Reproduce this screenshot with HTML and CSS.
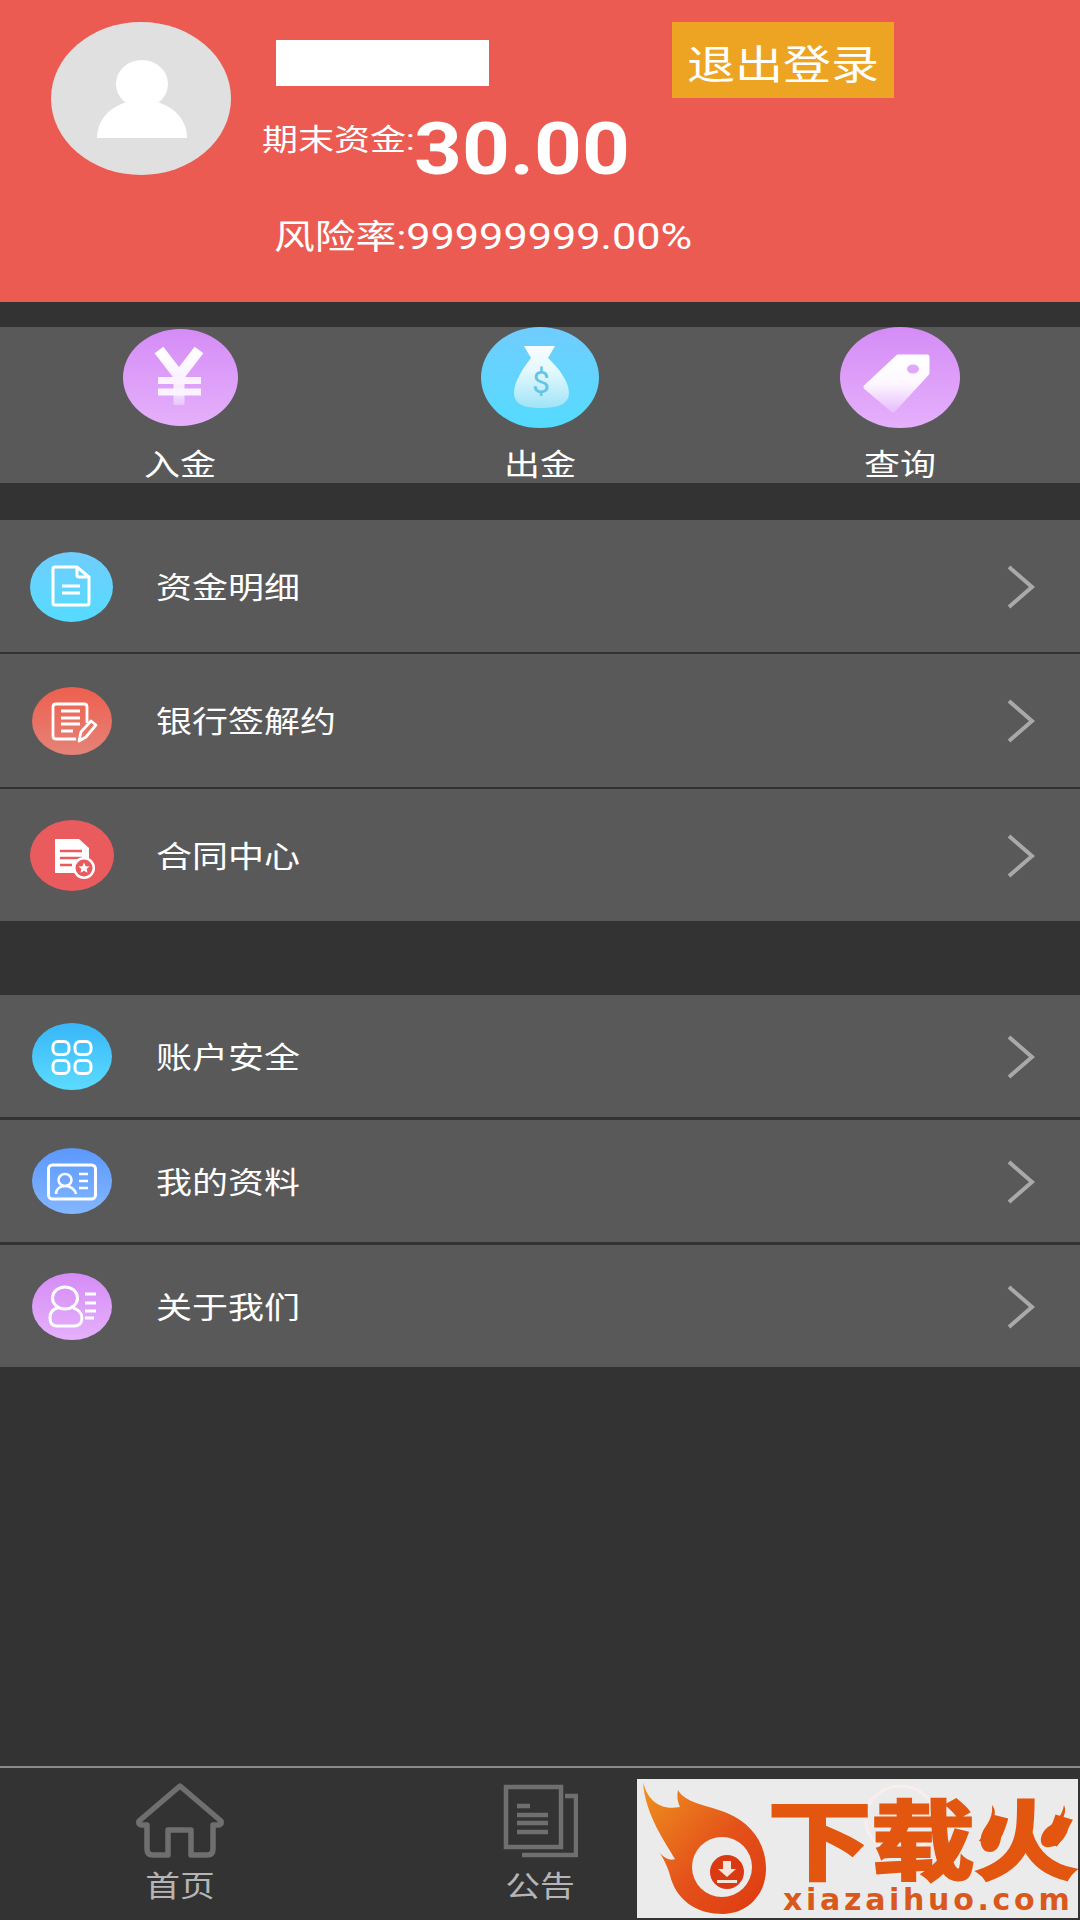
FILE: index.html
```html
<!DOCTYPE html>
<html lang="zh-CN">
<head>
    <meta charset="UTF-8">
    <meta name="viewport" content="width=device-width, initial-scale=1.0">
    <title>我的账户</title>
    <link rel="stylesheet" href="styles.css">
</head>
<body>
    <svg class="defs" width="0" height="0">
        <defs>
            <linearGradient id="g-purple" x1="0" y1="0" x2="0" y2="1"><stop offset="0" stop-color="#d58cf6"/><stop offset="1" stop-color="#e5b0fb"/></linearGradient>
            <linearGradient id="g-sky" x1="0" y1="0" x2="0" y2="1"><stop offset="0" stop-color="#70cdfe"/><stop offset="1" stop-color="#55dbff"/></linearGradient>
            <linearGradient id="g-blue" x1="0" y1="0" x2="0" y2="1"><stop offset="0" stop-color="#38b6f8"/><stop offset="1" stop-color="#5cdbff"/></linearGradient>
            <linearGradient id="g-coral" x1="0" y1="0" x2="0" y2="1"><stop offset="0" stop-color="#ee5f4e"/><stop offset="1" stop-color="#e58378"/></linearGradient>
            <linearGradient id="g-royal" x1="0" y1="0" x2="0" y2="1"><stop offset="0" stop-color="#5c99fd"/><stop offset="1" stop-color="#83b6ff"/></linearGradient>
            <linearGradient id="g-white-down" x1="0" y1="0" x2="0" y2="1"><stop offset="0" stop-color="#ffffff"/><stop offset="0.5" stop-color="#fdf8ff"/><stop offset="0.8" stop-color="#f1d6fe"/><stop offset="1" stop-color="#e9bffc"/></linearGradient>
            <linearGradient id="g-yen" x1="0" y1="0" x2="0" y2="1"><stop offset="0" stop-color="#ffffff"/><stop offset="0.7" stop-color="#f8edff"/><stop offset="1" stop-color="#e9c4fc"/></linearGradient>
            <linearGradient id="g-bag" x1="0" y1="0" x2="0" y2="1"><stop offset="0" stop-color="#f8fdff"/><stop offset="0.4" stop-color="#e4f8fd"/><stop offset="1" stop-color="#9fe4f7"/></linearGradient>
            <linearGradient id="g-flame" x1="0" y1="0" x2="1" y2="1"><stop offset="0" stop-color="#ef931f"/><stop offset="0.55" stop-color="#e4521a"/><stop offset="1" stop-color="#dd3a10"/></linearGradient>
        </defs>
    </svg>

    <header class="user-head">
        <svg class="avatar" width="180" height="153" viewBox="0 0 180 153">
            <ellipse cx="90" cy="76.500" rx="90" ry="76.500" fill="#e0e0e0"/>
            <ellipse cx="91" cy="62" rx="26" ry="24" fill="#fff"/>
            <path d="M46 116C46 92 68 78 91 78C114 78 136 92 136 116Z" fill="#fff"/>
        </svg>
        <div class="user-info">
            <div class="name-row">
                <div class="name-box"></div>
                <div class="logout"><span class="stretch-c">退出登录</span></div>
            </div>
            <div class="balance-row">
                <span class="balance-label stretch">期末资金:</span>
                <span class="balance-num stretch">30.00</span>
            </div>
            <div class="risk-row"><span class="stretch">风险率:<span class="risk-num">99999999.00%</span></span></div>
        </div>
    </header>

    <section class="actions">
        <div class="action">
            <svg class="action-yen" width="115" height="97" viewBox="0 0 115 97">
                <ellipse cx="57.500" cy="48.500" rx="57.500" ry="48.500" fill="url(#g-purple)"/>
                <path d="M36 21L56 47L76 21M56 47V76" fill="none" stroke="url(#g-yen)" stroke-width="11"/>
                <path d="M35 51.500H78M35 63H78" fill="none" stroke="#fbf3ff" stroke-width="7"/>
            </svg>
            <span class="action-text stretch-c">入金</span>
        </div>
        <div class="action">
            <svg width="118" height="101" viewBox="0 0 118 101">
                <ellipse cx="59" cy="50.500" rx="59" ry="50.500" fill="url(#g-sky)"/>
                <path d="M43 19L74 19L67 31C78 41 88 55 88 66C88 77 77 81 60 81C43 81 33 77 33 66C33 55 42 41 50 31Z" fill="url(#g-bag)"/>
                <text class="bag-mark" x="60" y="66" text-anchor="middle">$</text>
            </svg>
            <span class="action-text stretch-c">出金</span>
        </div>
        <div class="action">
            <svg width="120" height="101" viewBox="0 0 120 101">
                <ellipse cx="60" cy="50.500" rx="60" ry="50.500" fill="url(#g-purple)"/>
                <path d="M87 30L58 30L26 60L53 83L87 46Z" fill="url(#g-white-down)" stroke="url(#g-white-down)" stroke-width="5" stroke-linejoin="round"/>
                <ellipse cx="73" cy="42" rx="6" ry="4.500" fill="#dfa8f8"/>
            </svg>
            <span class="action-text stretch-c">查询</span>
        </div>
    </section>

    <section class="menu-group">
        <div class="menu-row">
            <svg class="menu-icon" width="83" height="70" viewBox="0 0 83 70">
                <ellipse cx="41.500" cy="35" rx="41.500" ry="35" fill="url(#g-sky)"/>
                <path d="M25 15H47L59 25V51Q59 53 57 53H25Q23 53 23 51V17Q23 15 25 15ZM47 15V23Q47 25 49 25H59M32 34H50M32 41H50" fill="none" stroke="#fff" stroke-width="3"/>
            </svg>
            <span class="menu-text stretch">资金明细</span>
            <svg class="chevron" width="28" height="44" viewBox="0 0 28 44"><path d="M2 2L25 22L2 42" fill="none" stroke="#a9a9a9" stroke-width="4"/></svg>
        </div>
        <div class="menu-row">
            <svg class="menu-icon icon-narrow" width="80" height="68" viewBox="0 0 80 68">
                <ellipse cx="40" cy="34" rx="40" ry="34" fill="url(#g-coral)"/>
                <path d="M44 52H24Q21 52 21 49V20Q21 17 24 17H52Q55 17 55 20V36M29 24H48M29 31H48M29 37H48M29 44H41" fill="none" stroke="#fff" stroke-width="2.800"/>
                <path d="M47 54L49 45L59 34L64 38L54 50Z" fill="none" stroke="#fff" stroke-width="2.800" stroke-linejoin="round"/>
            </svg>
            <span class="menu-text stretch">银行签解约</span>
            <svg class="chevron" width="28" height="44" viewBox="0 0 28 44"><path d="M2 2L25 22L2 42" fill="none" stroke="#a9a9a9" stroke-width="4"/></svg>
        </div>
        <div class="menu-row">
            <svg class="menu-icon icon-wide" width="84" height="71" viewBox="0 0 84 71">
                <ellipse cx="42" cy="35.500" rx="42" ry="35.500" fill="#ea5b5e"/>
                <path d="M25 19H49L59 28V53H25Z" fill="#fff"/>
                <path d="M30 31H52M30 38H52M30 45H42" fill="none" stroke="#ea5b5e" stroke-width="2.500"/>
                <circle cx="54" cy="48" r="11" fill="#fff"/>
                <circle cx="54" cy="48" r="8.500" fill="#ea5b5e"/>
                <path d="M54 42.500L55.600 46.200L59.500 46.500L56.600 49L57.500 52.800L54 50.800L50.500 52.800L51.400 49L48.500 46.500L52.400 46.200Z" fill="#fff"/>
            </svg>
            <span class="menu-text stretch">合同中心</span>
            <svg class="chevron" width="28" height="44" viewBox="0 0 28 44"><path d="M2 2L25 22L2 42" fill="none" stroke="#a9a9a9" stroke-width="4"/></svg>
        </div>
    </section>

    <section class="menu-group menu-group-b">
        <div class="menu-row">
            <svg class="menu-icon icon-narrow" width="80" height="67" viewBox="0 0 80 67">
                <ellipse cx="40" cy="33.500" rx="40" ry="33.500" fill="url(#g-blue)"/>
                <g fill="none" stroke="#fff" stroke-width="3">
                    <rect x="21" y="18.500" width="16" height="13" rx="5"/>
                    <rect x="43" y="18.500" width="16" height="13" rx="5"/>
                    <rect x="21" y="37.500" width="16" height="13" rx="5"/>
                    <rect x="43" y="37.500" width="16" height="13" rx="5"/>
                </g>
            </svg>
            <span class="menu-text stretch">账户安全</span>
            <svg class="chevron" width="28" height="44" viewBox="0 0 28 44"><path d="M2 2L25 22L2 42" fill="none" stroke="#a9a9a9" stroke-width="4"/></svg>
        </div>
        <div class="menu-row">
            <svg class="menu-icon icon-narrow" width="80" height="66" viewBox="0 0 80 66">
                <ellipse cx="40" cy="33" rx="40" ry="33" fill="url(#g-royal)"/>
                <rect x="16.500" y="17" width="47" height="34" rx="4" fill="none" stroke="#fff" stroke-width="3"/>
                <g fill="none" stroke="#fff" stroke-width="2.500">
                    <ellipse cx="33" cy="32" rx="6.500" ry="6"/>
                    <path d="M24 46C24 41 28 38 33 38C38 38 43 41 44 46"/>
                    <path d="M47 26H56M47 33H56M47 40H56"/>
                </g>
            </svg>
            <span class="menu-text stretch">我的资料</span>
            <svg class="chevron" width="28" height="44" viewBox="0 0 28 44"><path d="M2 2L25 22L2 42" fill="none" stroke="#a9a9a9" stroke-width="4"/></svg>
        </div>
        <div class="menu-row">
            <svg class="menu-icon icon-narrow" width="80" height="67" viewBox="0 0 80 67">
                <ellipse cx="40" cy="33.500" rx="40" ry="33.500" fill="url(#g-purple)"/>
                <g fill="none" stroke="#fff" stroke-width="3">
                    <ellipse cx="33" cy="25" rx="12.500" ry="11"/>
                    <path d="M26 35C20 36 18 40 18 45C18 50 20 53 25 53H42C47 53 50 50 50 45C50 40 46 36 41 35"/>
                    <path d="M53 21H64M53 30H64M53 38H64M53 45H62"/>
                </g>
            </svg>
            <span class="menu-text stretch">关于我们</span>
            <svg class="chevron" width="28" height="44" viewBox="0 0 28 44"><path d="M2 2L25 22L2 42" fill="none" stroke="#a9a9a9" stroke-width="4"/></svg>
        </div>
    </section>

    <nav class="tabbar">
        <div class="tab">
            <svg width="88" height="75" viewBox="0 0 88 75">
                <path d="M44 3L3 38Q2 42 6 42L11 42V66Q11 72 17 72H32V47H55V72H71Q77 72 77 66V42L82 42Q86 42 85 38Z" fill="none" stroke="#6f6f6f" stroke-width="5.500" stroke-linejoin="round"/>
            </svg>
            <span class="tab-text stretch-c">首页</span>
        </div>
        <div class="tab">
            <svg width="75" height="75" viewBox="0 0 75 75">
                <g fill="none" stroke="#6f6f6f" stroke-width="4.500">
                    <rect x="3" y="4" width="55" height="60"/>
                    <path d="M62 13H73V72H19"/>
                    <path d="M14 23H27M14 32H45M14 40H45M14 49H45"/>
                </g>
            </svg>
            <span class="tab-text stretch-c">公告</span>
        </div>
        <div class="tab">
            <svg width="75" height="75" viewBox="0 0 75 75">
                <ellipse cx="37.500" cy="36" rx="35" ry="33" fill="none" stroke="#ec5b52" stroke-width="3"/>
            </svg>
        </div>
    </nav>

    <!-- download site banner sits on top of the last tab -->
    <div class="site-logo">
        <svg class="site-mark" width="131" height="139" viewBox="0 0 131 139">
            <path d="M6 3C10 20 22 32 43 28C40 22 40 16 41 11C48 24 70 26 90 34C114 44 129 64 129 90C129 116 110 135 86 135C62 135 42 124 34 100C32 92 30 86 23 74C28 80 34 82 38 80C30 66 8 36 6 3Z" fill="url(#g-flame)"/>
            <circle cx="85" cy="88" r="30" fill="#ebebeb"/>
            <circle cx="90" cy="93" r="17" fill="#d93a12"/>
            <path d="M86 82H94V90H99L90 98L81 90H86ZM80 101H100V104H80Z" fill="#f3e4dc"/>
        </svg>
        <div class="site-brand">
            <div class="site-name"><span class="stretch">下载火</span></div>
            <div class="site-url">xiazaihuo.com</div>
        </div>
        <svg class="site-flames" width="90" height="50" viewBox="0 0 90 50">
            <path d="M12 0C20 10 8 16 12 24C14 28 18 26 19 20C24 30 20 47 10 47C0 47 -2 34 4 24C8 18 13 12 12 0Z" fill="#e2560f"/>
            <path d="M84 0C88 8 80 14 84 18C86 20 88 18 89 16C90 30 78 44 66 42C58 40 60 28 68 22C74 18 82 12 84 0Z" fill="#e2560f"/>
        </svg>
    </div>
</body>
</html>
```

FILE: styles.css
```css
* { box-sizing: border-box; }
html, body { margin: 0; padding: 0; }
body {
    position: relative;
    display: flex;
    flex-direction: column;
    width: 1080px;
    height: 1920px;
    overflow: hidden;
    background: #333333;
    color: #fff;
    font-family: Roboto, "Noto Sans CJK SC", sans-serif;
}
svg { display: block; flex: none; }
.defs { position: absolute; }

.stretch, .stretch-c {
    display: inline-block;
    white-space: nowrap;
    transform: scaleX(1.2);
}
.stretch { transform-origin: left center; }
.stretch-c { transform-origin: center center; }

.user-head {
    display: flex;
    height: 302px;
    padding: 22px 0 0 51px;
    background: #eb5b52;
}
.avatar { margin-right: 31px; }
.user-info { flex: 1; }
.name-row { display: flex; padding-left: 14px; }
.name-box { width: 213px; height: 46px; margin-top: 18px; background: #fff; }
.logout {
    display: flex;
    align-items: center;
    justify-content: center;
    width: 222px;
    height: 76px;
    margin-left: 183px;
    padding-top: 4px;
    background: #eca422;
    font-size: 40px;
}
.balance-row { display: flex; align-items: flex-start; margin-top: 14px; }
.balance-label { width: 152px; margin-top: 4px; font-size: 30px; line-height: 48px; }
.balance-num { margin-top: -4px; font-size: 72px; line-height: 84px; font-weight: 700; transform: scaleX(1.16); }
.risk-row { margin-top: 23px; padding-left: 12px; font-size: 34px; line-height: 44px; }
.risk-num { font-size: 36px; }

.actions {
    display: grid;
    grid-template-columns: repeat(3, 1fr);
    height: 156px;
    margin-top: 25px;
    background: #595959;
}
.action { display: flex; flex-direction: column; align-items: center; }
.action-yen { margin-top: 2px; margin-bottom: 2px; }
.action-text { margin-top: 19px; font-size: 30px; line-height: 36px; }
.bag-mark { font-family: Roboto, sans-serif; font-size: 32px; font-weight: 400; fill: #62c4e8; }

.menu-group {
    display: flex;
    flex-direction: column;
    gap: 2px;
    height: 401px;
    margin-top: 37px;
}
.menu-group-b { height: 372px; margin-top: 74px; gap: 3px; }
.menu-row {
    display: flex;
    flex: 1;
    align-items: center;
    padding-top: 2px;
    padding-left: 30px;
    background: #595959;
}
.menu-group-b .menu-icon { margin-top: -2px; }
.menu-icon { margin-right: 43px; }
.icon-narrow { margin-left: 2px; margin-right: 44px; }
.icon-wide { margin-right: 42px; }
.menu-text { margin-top: 2px; font-size: 30px; line-height: 40px; }
.chevron { margin-left: auto; margin-right: 45px; }

.tabbar {
    display: grid;
    grid-template-columns: repeat(3, 1fr);
    height: 154px;
    margin-top: auto;
    border-top: 2px solid #8a8a8a;
    padding-top: 15px;
}
.tab { display: flex; flex-direction: column; align-items: center; }
.tab-text { margin-top: 11px; font-size: 29px; line-height: 36px; color: #b5b5b5; }

.site-logo {
    position: absolute;
    left: 637px;
    top: 1779px;
    display: flex;
    width: 441px;
    height: 139px;
    background: rgba(251, 251, 251, 0.92);
}
.site-name {
    height: 108px;
    padding-top: 9px;
    font-family: "Noto Sans CJK SC", sans-serif;
    font-size: 86px;
    line-height: 96px;
    font-weight: 700;
    color: #e2560f;
    -webkit-text-stroke: 3px #e2560f;
}
.site-url {
    font-family: "DejaVu Sans", sans-serif;
    font-size: 30px;
    line-height: 26px;
    font-weight: 700;
    letter-spacing: 3.700px;
    padding-left: 15px;
    color: #d9581c;
}
.site-flames { position: absolute; left: 343px; top: 26px; }
```
